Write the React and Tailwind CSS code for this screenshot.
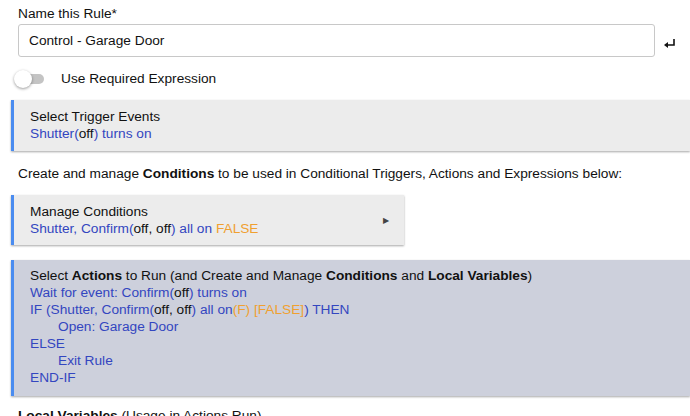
export default function App() {
  const B = "text-[#3346c0]";
  const O = "text-[#f0a030]";
  return (
    <div className="w-[690px] h-[416px] overflow-hidden bg-white text-[13.7px] text-[#111] leading-[17px]" style={{fontFamily: "'Liberation Sans', Arial, sans-serif"}}>
      <div className="pl-[18px] pt-[5px]">Name this Rule*</div>
      <div className="flex items-center mt-[2px]">
        <div className="ml-[18px] w-[637px] h-[33px] border border-[#c8c8c8] rounded-[3px] flex items-center pl-[10px]">Control - Garage Door</div>
        <svg className="ml-[8px] mt-[6px]" width="14" height="12" viewBox="0 0 14 12"><path d="M11 1v6H3" stroke="#111" strokeWidth="1.6" fill="none"/><path d="M1 7l4-3v6z" fill="#111"/></svg>
      </div>
      <div className="flex items-center mt-[13px] pl-[14px]">
        <div className="relative w-[32px] h-[14px]">
          <div className="absolute left-[6px] top-[2px] w-[24px] h-[10px] rounded-full bg-[#c4c4c4]"/>
          <div className="absolute left-[0] top-[-2px] w-[18px] h-[18px] rounded-full bg-white shadow-[0_1px_3px_rgba(0,0,0,0.4)]"/>
        </div>
        <span className="ml-[15px]">Use Required Expression</span>
      </div>
      <div className="mt-[13px] ml-[11px] bg-[#ececec] border-l-[3px] border-l-[#4a8cf0] shadow-[0_1px_2px_rgba(0,0,0,0.35)] pl-[16px] pt-[8px] h-[51px]">
        <div>Select Trigger Events</div>
        <div className={B}>Shutter(<span className="text-[#111]">off</span>) turns on</div>
      </div>
      <div className="pl-[18px] mt-[14px]">Create and manage <b>Conditions</b> to be used in Conditional Triggers, Actions and Expressions below:</div>
      <div className="mt-[13px] ml-[11px] w-[393px] bg-[#ececec] border-l-[3px] border-l-[#4a8cf0] shadow-[0_1px_2px_rgba(0,0,0,0.35)] pl-[16px] h-[50px] flex items-center justify-between pr-[15px]">
        <div>
          <div>Manage Conditions</div>
          <div className={B}>Shutter, Confirm(<span className="text-[#111]">off, off</span>) all on <span className={O}>FALSE</span></div>
        </div>
        <span className="text-[8px] text-[#444]">▶</span>
      </div>
      <div className="mt-[15px] ml-[11px] bg-[#cdd0dc] border-l-[3px] border-l-[#4a8cf0] shadow-[0_1px_2px_rgba(0,0,0,0.35)] pl-[16px] pt-[7px] h-[136px]">
        <div>Select <b>Actions</b> to Run (and Create and Manage <b>Conditions</b> and <b>Local Variables</b>)</div>
        <div className={B}>Wait for event: Confirm(<span className="text-[#111]">off</span>) turns on</div>
        <div className={B}>IF (Shutter, Confirm(<span className="text-[#111]">off, off</span>) all on<span className={O}>(F) [FALSE]</span>) THEN</div>
        <div className={B + " pl-[28px]"}>Open: Garage Door</div>
        <div className={B}>ELSE</div>
        <div className={B + " pl-[28px]"}>Exit Rule</div>
        <div className={B}>END-IF</div>
      </div>
      <div className="pl-[18px] mt-[11px]"><b>Local Variables</b> (Usage in Actions Run)</div>
    </div>
  );
}
